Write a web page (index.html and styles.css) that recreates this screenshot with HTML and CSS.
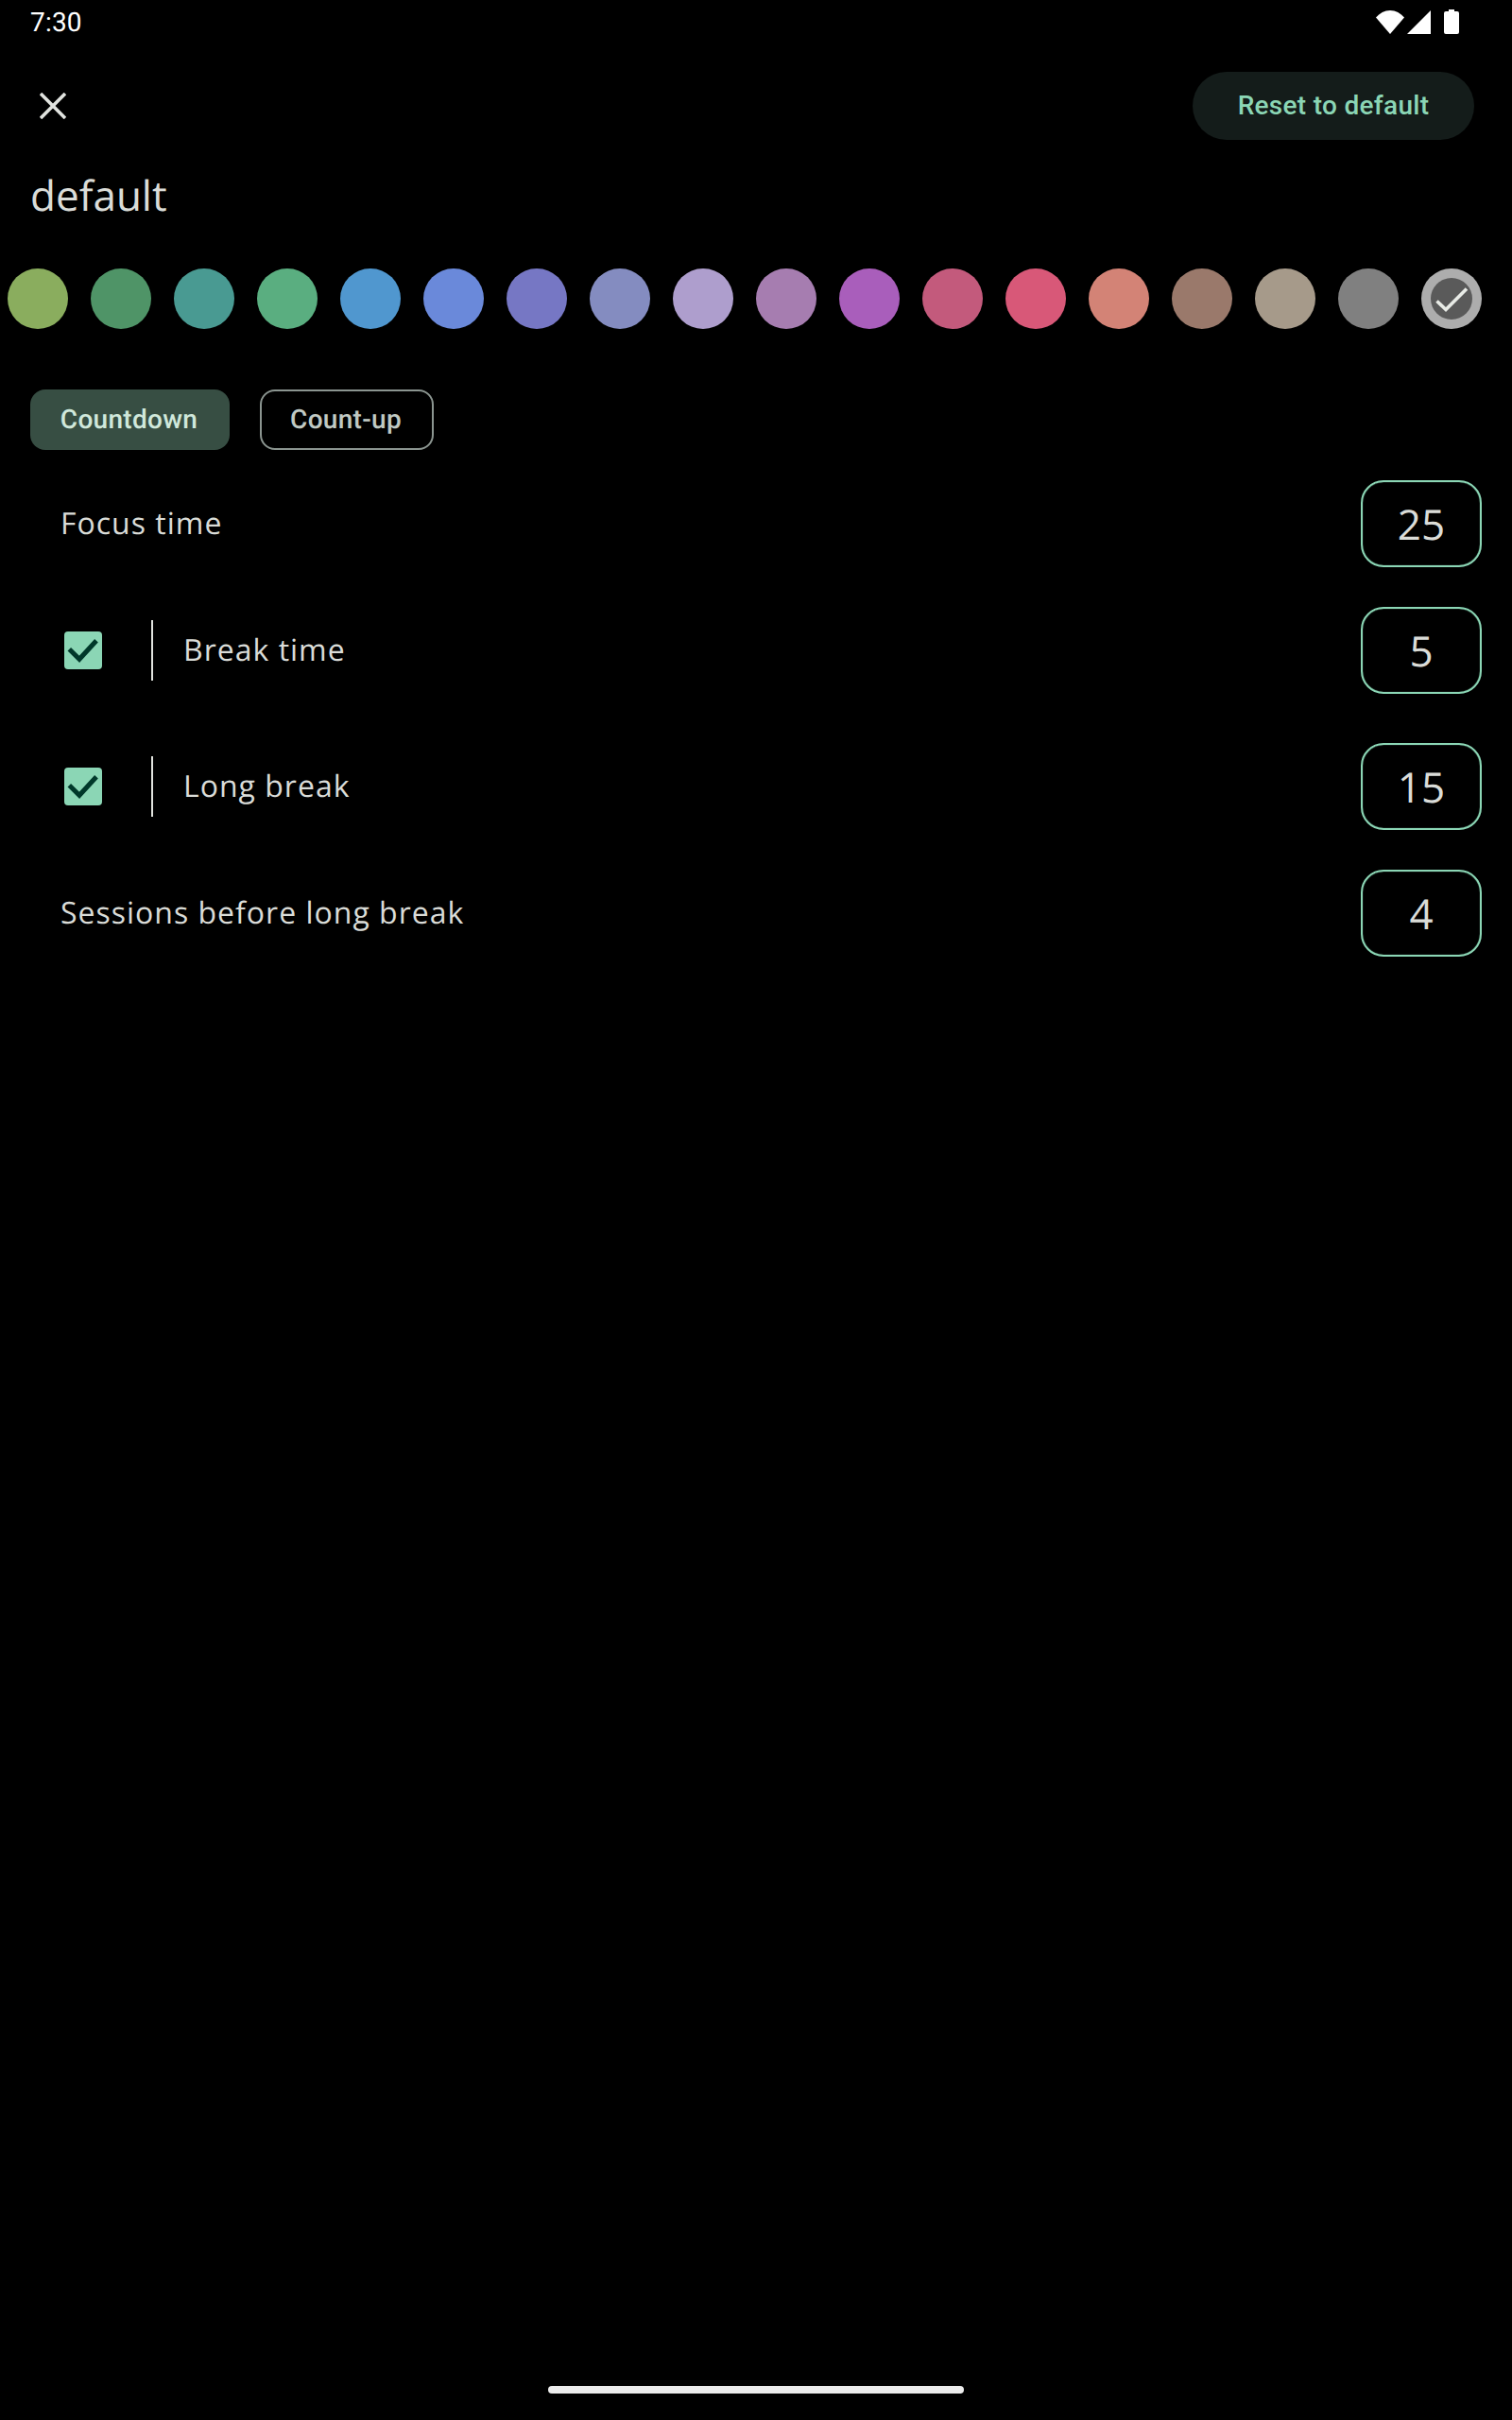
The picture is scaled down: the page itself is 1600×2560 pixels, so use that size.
FILE: index.html
```html
<!DOCTYPE html>
<html lang="en">
<head>
<meta charset="utf-8">
<title>default</title>
<link rel="stylesheet" href="styles.css">
</head>
<body>
<div class="page">
  <div class="status">
    <span class="time">7:30</span>
    <div class="status-icons">
      <svg class="ic-wifi" width="30" height="25" viewBox="0 0 30 25"><path d="M0 7.5C4 3 9 0 15 0s11 3 15 7.5L15 25z" fill="#fff"/></svg>
      <svg class="ic-signal" width="25" height="25" viewBox="0 0 25 25"><path d="M25 0v25H0z" fill="#fff"/></svg>
      <svg class="ic-battery" width="16" height="26" viewBox="0 0 16 26"><path d="M5 0h6v2h3a2 2 0 0 1 2 2v20a2 2 0 0 1-2 2H2a2 2 0 0 1-2-2V4a2 2 0 0 1 2-2h3z" fill="#fff"/></svg>
    </div>
  </div>
  <div class="toolbar">
    <svg class="ic-close" width="28" height="28" viewBox="0 0 28 28"><path d="M1 1l26 26M27 1L1 27" stroke="#e1e3df" stroke-width="3.6" fill="none"/></svg>
    <button class="reset">Reset to default</button>
  </div>
  <h1 class="title">default</h1>
  <div class="swatches">
    <span class="swatch c1"></span><span class="swatch c2"></span><span class="swatch c3"></span><span class="swatch c4"></span>
    <span class="swatch c5"></span><span class="swatch c6"></span><span class="swatch c7"></span><span class="swatch c8"></span>
    <span class="swatch c9"></span><span class="swatch c10"></span><span class="swatch c11"></span><span class="swatch c12"></span>
    <span class="swatch c13"></span><span class="swatch c14"></span><span class="swatch c15"></span><span class="swatch c16"></span>
    <span class="swatch c17"></span>
    <span class="swatch c18">
      <span class="swatch-inner">
        <svg width="44" height="44" viewBox="0 0 44 44"><path d="M6.5 24.5l9.500 9L38 11.500" stroke="#e8ebe6" stroke-width="3.600" fill="none"/></svg>
      </span>
    </span>
  </div>
  <div class="modes">
    <span class="mode mode-on">Countdown</span>
    <span class="mode mode-off">Count-up</span>
  </div>
  <div class="rows">
    <div class="row">
      <span class="label label-plain">Focus time</span>
      <span class="value">25</span>
    </div>
    <div class="row row-a">
      <div class="toggle-wrap">
        <span class="checkbox"><svg width="40" height="40" viewBox="0 0 40 40"><path d="M5.300 18.700L16 29.300 34 9.700" stroke="#00382a" stroke-width="5" fill="none"/></svg></span>
        <span class="divider"></span>
        <span class="label">Break time</span>
      </div>
      <span class="value">5</span>
    </div>
    <div class="row row-b">
      <div class="toggle-wrap">
        <span class="checkbox"><svg width="40" height="40" viewBox="0 0 40 40"><path d="M5.300 18.700L16 29.300 34 9.700" stroke="#00382a" stroke-width="5" fill="none"/></svg></span>
        <span class="divider"></span>
        <span class="label">Long break</span>
      </div>
      <span class="value">15</span>
    </div>
    <div class="row row-a">
      <span class="label label-plain">Sessions before long break</span>
      <span class="value">4</span>
    </div>
  </div>
  <div class="home"></div>
</div>
</body>
</html>
```
FILE: styles.css
```css
* { box-sizing: border-box; }
html, body { margin: 0; padding: 0; background: #000; }
.page {
  width: 1600px;
  height: 2560px;
  background: #000;
  display: flex;
  flex-direction: column;
  font-family: "Open Sans", sans-serif;
  color: #dfe1dd;
  text-rendering: geometricPrecision;
}
.status {
  height: 48px;
  display: flex;
  align-items: center;
  justify-content: space-between;
  padding: 0 56px 2px 32px;
}
.time {
  font-family: Roboto, sans-serif;
  font-size: 28px;
  color: #fff;
  letter-spacing: 0.2px;
}
.status-icons { display: flex; align-items: center; }
.ic-signal { margin-left: 3px; }
.ic-battery { margin-left: 14px; }
.toolbar {
  margin-top: 28px;
  height: 72px;
  display: flex;
  align-items: center;
  justify-content: space-between;
  padding: 0 40px 0 42px;
}
.reset {
  width: 298px;
  height: 72px;
  border: 0;
  border-radius: 36px;
  background: #141c1a;
  color: #8bd6b5;
  font-family: Roboto, sans-serif;
  font-weight: 500;
  font-size: 28px;
  letter-spacing: 0.3px;
  padding: 0 0 2px;
}
.title {
  margin: 30px 0 0;
  padding-left: 32px;
  height: 56px;
  line-height: 56px;
  font-size: 44px;
  font-weight: 400;
  color: #dadcd8;
}
.swatches {
  margin-top: 50px;
  display: flex;
  justify-content: space-between;
  padding: 0 32px 0 8px;
}
.swatch {
  width: 64px;
  height: 64px;
  border-radius: 50%;
  display: flex;
  align-items: center;
  justify-content: center;
}
.c1 { background: #8aad5e; }
.c2 { background: #4f9467; }
.c3 { background: #499a92; }
.c4 { background: #5aae80; }
.c5 { background: #5097cf; }
.c6 { background: #6a89da; }
.c7 { background: #7677c4; }
.c8 { background: #848cc0; }
.c9 { background: #ae9ecd; }
.c10 { background: #a67db0; }
.c11 { background: #a95ebb; }
.c12 { background: #c35a7c; }
.c13 { background: #d85878; }
.c14 { background: #d38376; }
.c15 { background: #9a796b; }
.c16 { background: #a69a8a; }
.c17 { background: #808080; }
.c18 { background: #adadad; }
.swatch-inner {
  width: 44px;
  height: 44px;
  border-radius: 50%;
  background: #5a5a5a;
  display: block;
}
.swatch-inner svg { display: block; }
.modes {
  margin-top: 64px;
  padding-left: 32px;
  display: flex;
  gap: 32px;
}
.mode {
  height: 64px;
  border-radius: 16px;
  display: flex;
  align-items: center;
  justify-content: center;
  font-family: Roboto, sans-serif;
  font-weight: 500;
  font-size: 28px;
  letter-spacing: 0.3px;
  padding-bottom: 2px;
}
.mode-on { width: 211px; background: #374e43; color: #d0e8db; padding-right: 2px; }
.mode-off { width: 184px; border: 2px solid #8b9590; color: #c0c9c3; padding-right: 2px; }
.rows {
  margin-top: 32px;
  padding: 0 32px 0 64px;
  display: flex;
  flex-direction: column;
}
.row {
  height: 92px;
  display: flex;
  align-items: center;
  justify-content: space-between;
}
.row-a { margin-top: 42px; }
.row-b { margin-top: 52px; }
.label {
  font-size: 32px;
  letter-spacing: 1px;
  color: #dadcd8;
  padding-bottom: 1px;
}
.value {
  width: 128px;
  height: 92px;
  border: 2px solid #8bd6b5;
  border-radius: 24px;
  box-shadow: inset 0 0 1px #8bd6b5;
  display: flex;
  align-items: center;
  justify-content: center;
  font-size: 44px;
  color: #dadcd8;
}
.toggle-wrap { display: flex; align-items: center; padding-left: 4px; }
.checkbox {
  width: 40px;
  height: 40px;
  border-radius: 4px;
  background: #8bd6b5;
  display: block;
}
.checkbox svg { display: block; }
.divider {
  width: 2px;
  height: 64px;
  background: #e1e3df;
  margin: 0 32px 0 52px;
}
.home {
  margin: auto auto 28px;
  width: 440px;
  height: 8px;
  border-radius: 4px;
  background: #ececec;
}
```
